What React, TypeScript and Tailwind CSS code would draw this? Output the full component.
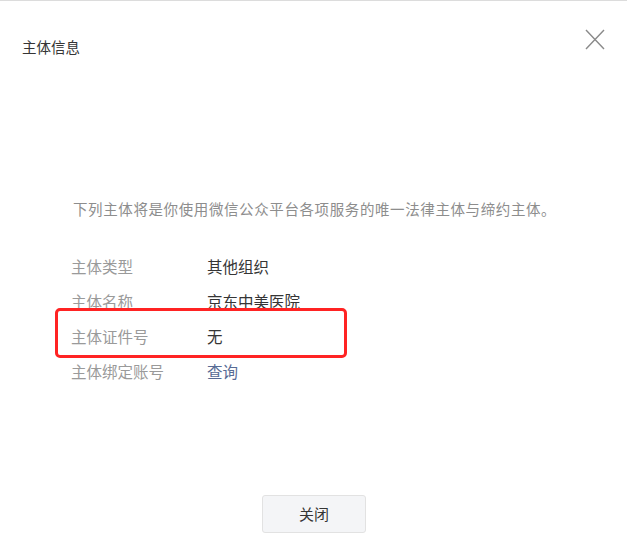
const FONT = { fontFamily: '"Noto Sans CJK SC", "Noto Sans", sans-serif' };

const rows = [
  { label: "主体类型", value: "其他组织" },
  { label: "主体名称", value: "京东中美医院" },
  { label: "主体证件号", value: "无", marked: true },
  { label: "主体绑定账号", value: "查询", link: true },
];

function CloseIcon() {
  return (
    <svg width="20" height="21" viewBox="0 0 20 21" fill="none" stroke="#8a8a8a" strokeWidth="1.4">
      <path d="M1 1l18 19M19 1L1 20" />
    </svg>
  );
}

export default function App() {
  return (
    <div
      className="w-[627px] h-[548px] bg-white border-t border-[#dcdcdc] flex flex-col text-[#353535]"
      style={FONT}
    >
      {/* header */}
      <div className="h-[70px] flex justify-between items-start pl-[22px] pr-[22px] pt-[28px]">
        <h3 className="mt-[6px] text-[14.5px] leading-[24px] font-normal">主体信息</h3>
        <button className="w-[20px] h-[21px] flex items-center justify-center">
          <CloseIcon />
        </button>
      </div>

      {/* body */}
      <div className="pl-[71px]">
        <p className="mt-[128px] pl-[2px] text-[14.5px] leading-[20px] tracking-[0.6px] text-[#8d8d8d]">
          下列主体将是你使用微信公众平台各项服务的唯一法律主体与缔约主体。
        </p>
        <ul className="mt-[30px]">
          {rows.map((r) => (
            <li key={r.label} className="relative flex h-[35px] items-center text-[15.5px]">
              <span className="w-[136px] text-[#9a9a9a]">{r.label}</span>
              {r.link ? (
                <a className="text-[#576b95] cursor-pointer">{r.value}</a>
              ) : (
                <span>{r.value}</span>
              )}
              {r.marked && (
                <div className="absolute left-[-16px] top-[-11px] w-[292px] h-[50px] border-[3px] border-[#ff2323] rounded-[5px]" />
              )}
            </li>
          ))}
        </ul>
      </div>

      {/* footer */}
      <div className="mt-[106px] flex pl-[262px]">
        <button className="w-[104px] h-[38px] rounded-[3px] border border-[#e2e2e2] bg-[#f4f5f7] text-[15px] text-[#353535]">
          关闭
        </button>
      </div>
    </div>
  );
}
